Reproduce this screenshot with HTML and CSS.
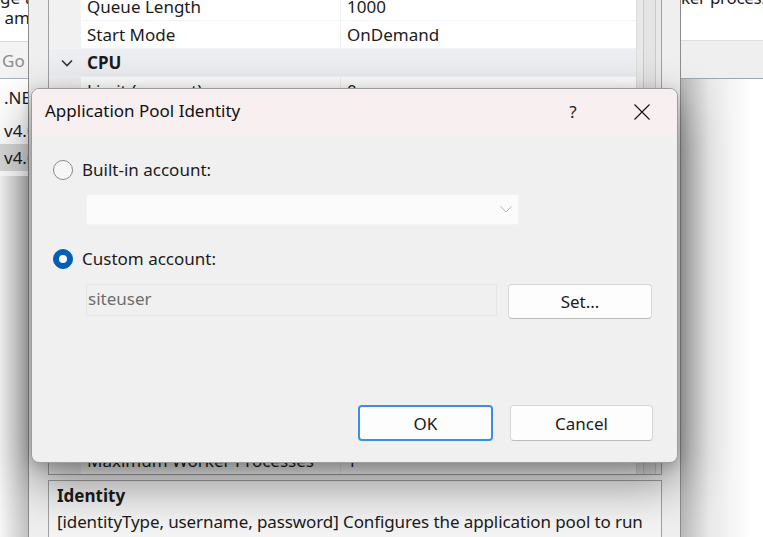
FILE: index.html
```html
<!DOCTYPE html>
<html>
<head>
<meta charset="utf-8">
<link rel="stylesheet" href="styles.css">
</head>
<body>
<div class="desktop">
  <div class="win-left">
    <div class="wl-text"><span class="wl-l1">ge th</span><span class="wl-l2">&nbsp;am</span></div>
    <div class="wl-bar">Go</div>
    <div class="wl-list">
      <div class="wl-item">.NET</div>
      <div class="wl-item">v4.0</div>
      <div class="wl-item sel">v4.0</div>
    </div>
  </div>

  <div class="win-right">
    <div class="wr-text">ker process</div>
    <div class="wr-bar"></div>
  </div>

  <div class="shadow-left"></div>
  <div class="shadow-right"></div>

  <div class="win-adv">
    <div class="grid">
      <div class="grid-rows">
        <div class="row"><span class="gut"></span><span class="name">Queue Length</span><span class="val">1000</span></div>
        <div class="row"><span class="gut"></span><span class="name">Start Mode</span><span class="val">OnDemand</span></div>
        <div class="row cat"><span class="gut"><svg class="chev" width="12" height="8" viewBox="0 0 12 8"><path d="M1 1.5 L6 6.5 L11 1.5" fill="none" stroke="#333" stroke-width="1.6"/></svg></span><span class="name">CPU</span><span class="val"></span></div>
        <div class="row"><span class="gut"></span><span class="name">Limit (percent)</span><span class="val">0</span></div>
        <div class="row"><span class="gut"></span><span class="name">Limit Action</span><span class="val">NoAction</span></div>
        <div class="row"><span class="gut"></span><span class="name">Limit Interval (minutes)</span><span class="val">5</span></div>
        <div class="row fill"><span class="gut"></span><span class="name"></span><span class="val"></span></div>
        <div class="row last"><span class="gut"></span><span class="name">Maximum Worker Processes</span><span class="val">1</span></div>
      </div>
      <div class="scroll"><div class="scroll-track"></div></div>
    </div>
    <div class="desc">
      <div class="desc-title">Identity</div>
      <div class="desc-text">[identityType, username, password] Configures the application pool to run</div>
    </div>
  </div>

  <div class="modal">
    <div class="modal-title">
      <span class="title-text">Application Pool Identity</span>
      <span class="help">?</span>
      <svg class="close" width="16" height="16" viewBox="0 0 16 16"><path d="M0.5 0.5 L15.5 15.5 M15.5 0.5 L0.5 15.5" stroke="#111" stroke-width="1.1" fill="none"/></svg>
    </div>
    <div class="modal-body">
      <div class="radio-row first">
        <span class="radio"></span>
        <span class="label">Built-in account:</span>
      </div>
      <div class="combo">
        <svg class="combo-chev" width="12" height="7" viewBox="0 0 12 7"><path d="M0.5 0.5 L6 6 L11.5 0.5" fill="none" stroke="#b5b5b5" stroke-width="1"/></svg>
      </div>
      <div class="radio-row second">
        <span class="radio checked"></span>
        <span class="label">Custom account:</span>
      </div>
      <div class="account-row">
        <div class="textbox">siteuser</div>
        <div class="btn set">Set...</div>
      </div>
      <div class="footer">
        <div class="btn ok">OK</div>
        <div class="btn cancel">Cancel</div>
      </div>
    </div>
  </div>
</div>
</body>
</html>
```

FILE: styles.css
```css
* { box-sizing: border-box; }
html, body {
  margin: 0;
  padding: 0;
  width: 763px;
  height: 537px;
  overflow: hidden;
  background: #ffffff;
}
body {
  font-family: "Segoe UI", "Noto Sans", sans-serif;
  font-size: 17px;
  color: #1b1b1b;
}
.desktop {
  position: relative;
  width: 763px;
  height: 537px;
  overflow: hidden;
  background: #ffffff;
}

/* left background window */
.win-left {
  position: absolute;
  left: 0;
  top: 0;
  width: 60px;
  height: 176px;
  background: #ffffff;
  display: flex;
  flex-direction: column;
}
.wl-text {
  height: 41px;
  display: flex;
  flex-direction: column;
  line-height: 20px;
  margin-top: -12px;
}
.wl-l1, .wl-l2 { white-space: nowrap; }
.wl-bar {
  height: 38px;
  margin-top: 12px;
  border-top: 1px solid #d9d9d9;
  border-bottom: 1px solid #a9b3bd;
  background: #f3f3f3;
  color: #8c8c8c;
  padding-left: 2px;
  display: flex;
  align-items: center;
}
.wl-list { display: flex; flex-direction: column; padding-top: 5px; }
.wl-item {
  height: 33px;
  line-height: 28px;
  padding-left: 4px;
  white-space: nowrap;
}
.wl-item.sel {
  height: 27px;
  line-height: 27px;
  background: #d9d9d9;
  margin-top: -6px;
}

/* right background window */
.win-right {
  position: absolute;
  left: 670px;
  top: 0;
  width: 93px;
  height: 537px;
  background: #ffffff;
  display: flex;
  flex-direction: column;
}
.wr-text {
  padding-left: 11px;
  margin-top: -12px;
  height: 52px;
  line-height: 20px;
  white-space: nowrap;
  letter-spacing: -0.3px;
}
.wr-bar {
  height: 39px;
  background: #efefef;
  border-top: 1px solid #dddddd;
  border-bottom: 1px solid #9da7b2;
}

.shadow-left {
  position: absolute;
  left: 0;
  top: 176px;
  width: 28px;
  height: 361px;
  background: linear-gradient(to right, rgba(0,0,0,0.03), rgba(0,0,0,0.24));
}
.shadow-right {
  position: absolute;
  left: 681px;
  top: 79px;
  width: 70px;
  height: 458px;
  background: linear-gradient(to right, rgba(0,0,0,0.28), rgba(0,0,0,0.09) 40%, rgba(0,0,0,0));
}

/* advanced settings window */
.win-adv {
  position: absolute;
  left: 28px;
  top: -7px;
  width: 653px;
  height: 560px;
  background: #efefef;
  border-left: 1px solid #8d8d8d;
  border-right: 1px solid #8d8d8d;
  padding: 0 18px 0 19px;
  display: flex;
  flex-direction: column;
  gap: 5px;
}
.grid {
  height: 482px;
  display: flex;
  border: 1px solid #a0a0a0;
  border-top: none;
  background: #ffffff;
}
.grid-rows {
  flex: 1;
  display: flex;
  flex-direction: column;
}
.row {
  display: flex;
  height: 28px;
  border-bottom: 1px solid #f0f3f8;
  line-height: 27px;
}
.row.fill { flex: 1; }
.row.last { line-height: 30px; border-bottom: none; }
.gut {
  width: 32px;
  background: #f1f1f1;
  display: flex;
  align-items: center;
  justify-content: center;
}
.name {
  width: 260px;
  padding-left: 6px;
  border-right: 1px solid #f0f0f0;
  white-space: nowrap;
}
.val {
  flex: 1;
  padding-left: 6px;
}
.row.cat { background: #eceef2; }
.row.cat .gut { background: transparent; }
.row.cat .name { font-weight: 700; border-right: none; }
.chev { margin-left: 4px; }
.scroll {
  width: 25px;
  background: #e9e9e9;
  border-left: 1px solid #dcdcdc;
  display: flex;
  justify-content: center;
}
.scroll-track {
  width: 13px;
  border-left: 1px solid #c9c9c9;
  border-right: 1px solid #c9c9c9;
  background: #e4e4e4;
}
.desc {
  flex: 1;
  border: 1px solid #a0a0a0;
  background: #f4f4f4;
  padding: 2px 8px;
  line-height: 26px;
}
.desc-title { font-weight: 700; }
.desc-text { white-space: nowrap; letter-spacing: -0.1px; }

/* modal */
.modal {
  position: absolute;
  left: 31px;
  top: 88px;
  width: 647px;
  height: 375px;
  border: 1px solid #9c9c9c;
  border-radius: 8px;
  background: #f0f0f0;
  box-shadow: 0 20px 50px rgba(0,0,0,0.45), 0 4px 14px rgba(0,0,0,0.18);
  display: flex;
  flex-direction: column;
  overflow: hidden;
}
.modal-title {
  height: 46px;
  background: #f7eff0;
  display: flex;
  align-items: center;
  padding-left: 13px;
  padding-right: 27px;
  flex-shrink: 0;
}
.title-text { flex: 1; color: #111; margin-top: -3px; }
.help {
  width: 20px;
  text-align: center;
  font-size: 17px;
  color: #222;
  margin-right: 51px;
  margin-top: -2px;
}
.close { display: block; }
.modal-body {
  flex: 1;
  display: flex;
  flex-direction: column;
  padding: 0 24px 21px 21px;
}
.radio-row {
  display: flex;
  align-items: center;
  height: 20px;
  gap: 9px;
}
.radio-row.first { margin-top: 25px; }
.radio-row.second { margin-top: 24px; }
.radio {
  width: 20px;
  height: 20px;
  border-radius: 50%;
  border: 1px solid #8a8a8a;
  background: #f6f6f6;
  flex-shrink: 0;
  display: flex;
  align-items: center;
  justify-content: center;
}
.radio.checked {
  background: #005fb8;
  border-color: #005fb8;
}
.radio.checked::after {
  content: "";
  width: 8px;
  height: 8px;
  border-radius: 50%;
  background: #ffffff;
}
.label { line-height: 20px; color: #1b1b1b; margin-top: -1px; }
.combo {
  margin-top: 14px;
  margin-left: 33px;
  width: 433px;
  height: 31px;
  background: #fbfbfb;
  border: 1px solid #f3f3f3;
  border-radius: 2px;
  display: flex;
  align-items: center;
  justify-content: flex-end;
  padding-right: 6px;
}
.account-row {
  margin-top: 15px;
  margin-left: 33px;
  display: flex;
  align-items: flex-start;
  gap: 11px;
}
.textbox {
  width: 411px;
  height: 32px;
  background: #f0f0f0;
  border: 1px solid #e5e5e5;
  color: #6d6d6d;
  padding-left: 1px;
  line-height: 28px;
}
.btn {
  height: 35px;
  background: #fdfdfd;
  border: 1px solid #d6d6d6;
  border-bottom-color: #bcbcbc;
  border-radius: 4px;
  display: flex;
  align-items: center;
  justify-content: center;
  color: #1b1b1b;
}
.btn.set { width: 144px; }
.footer {
  margin-top: auto;
  display: flex;
  justify-content: flex-end;
  gap: 17px;
}
.btn.ok {
  width: 135px;
  height: 36px;
  border: 2px solid #3d8ee0;
  border-radius: 4px;
}
.btn.cancel {
  width: 143px;
  height: 36px;
}
```
